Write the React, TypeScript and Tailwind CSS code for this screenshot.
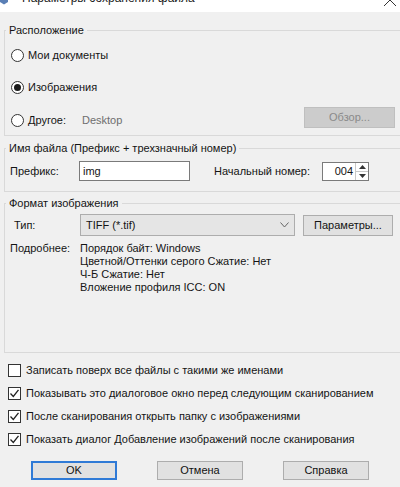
const font = { fontFamily: '"Liberation Sans", Arial, sans-serif' };

function Radio({ checked }: { checked?: boolean }) {
  return (
    <span className="flex h-[13px] w-[13px] shrink-0 items-center justify-center rounded-full border border-[#333] bg-white">
      {checked && <span className="h-[7px] w-[7px] rounded-full bg-[#1a1a1a]" />}
    </span>
  );
}

function Check({ checked }: { checked?: boolean }) {
  return (
    <span className="flex h-[13px] w-[13px] shrink-0 items-center justify-center border border-[#333] bg-white">
      {checked && (
        <svg width="11" height="11" viewBox="0 0 11 11">
          <path d="M1.5 5.5 L4.3 8.5 L9.5 1.8" fill="none" stroke="#222" strokeWidth="1.3" />
        </svg>
      )}
    </span>
  );
}

function Button({ label, primary }: { label: string; primary?: boolean }) {
  return (
    <div
      className={
        "flex h-[19px] w-[86px] items-center justify-center border bg-[#e1e1e1] text-[#111] " +
        (primary
          ? "border-[#2f7ad6] outline outline-1 -outline-offset-2 outline-[#2f7ad6]"
          : "border-[#adadad]")
      }
    >
      {label}
    </div>
  );
}

export default function App() {
  return (
    <div
      className="relative h-[487px] w-[400px] overflow-hidden bg-[#f0f0f0] text-[11px] leading-[15px] text-[#141414]"
      style={font}
    >
      {/* title bar, cropped at the top */}
      <div className="relative flex h-[12px] items-end overflow-hidden bg-white">
        <svg className="mb-[7px] shrink-0" width="9" height="6" viewBox="0 0 9 6">
          <path d="M0 0 L8 0 L8 3 L4 5.5 L0 3 Z" fill="#5a7fb5" />
        </svg>
        <span className="mb-[7px] ml-[13px] whitespace-nowrap text-[12px] leading-[13px] text-[#222]">
          Параметры сохранения файла
        </span>
        <svg className="absolute right-[3px] top-[-6px]" width="14" height="12" viewBox="0 0 14 12">
          <path d="M1 0 L13 12 M13 0 L1 12" stroke="#333" strokeWidth="1" />
        </svg>
      </div>

      {/* Расположение */}
      <fieldset className="ml-[4px] mt-[11px] w-[410px] border border-[#d9d9d9]">
        <legend className="ml-[1px] px-[3px]">Расположение</legend>
        <div className="w-[390px] pb-[5px] pl-[6px]">
          <div className="mt-[7px] flex h-[20px] items-center gap-[4px]">
            <Radio />
            <span>Мои документы</span>
          </div>
          <div className="mt-[12px] flex h-[20px] items-center gap-[4px]">
            <Radio checked />
            <span>Изображения</span>
          </div>
          <div className="mt-[13px] flex h-[20px] items-center gap-[4px]">
            <Radio />
            <span className="w-[50px]">Другое:</span>
            <span className="text-[#6e6e6e]">Desktop</span>
            <div className="ml-auto -mt-[5px] flex h-[21px] w-[91px] items-center justify-center border border-[#bfbfbf] bg-[#cccccc] text-[#8a8a8a]">
              Обзор...
            </div>
          </div>
        </div>
      </fieldset>

      {/* Имя файла */}
      <fieldset className="ml-[4px] mt-[5px] w-[410px] border border-[#d9d9d9]">
        <legend className="ml-[1px] px-[3px]">Имя файла (Префикс + трехзначный номер)</legend>
        <div className="mb-[10px] mt-[5px] flex h-[20px] items-center pl-[5px]">
          <span className="w-[69px]">Префикс:</span>
          <div className="flex h-[20px] w-[111px] items-center border border-[#7a7a7a] bg-white pl-[3px]">img</div>
          <span className="ml-[24px] w-[108px] whitespace-nowrap">Начальный номер:</span>
          <div className="flex h-[19px] w-[47px] items-stretch border border-[#7a7a7a] bg-white">
            <span className="flex flex-1 items-center justify-end pr-[2px]">004</span>
            <div className="flex w-[13px] flex-col border-l border-[#c8c8c8]">
              <div className="flex flex-1 items-center justify-center border-b border-[#c8c8c8]">
                <svg width="7" height="4" viewBox="0 0 7 4"><path d="M0 4 L3.5 0 L7 4 Z" fill="#333" /></svg>
              </div>
              <div className="flex flex-1 items-center justify-center">
                <svg width="7" height="4" viewBox="0 0 7 4"><path d="M0 0 L3.5 4 L7 0 Z" fill="#333" /></svg>
              </div>
            </div>
          </div>
        </div>
      </fieldset>

      {/* Формат изображения */}
      <fieldset className="ml-[4px] mt-[4px] w-[410px] border border-[#d9d9d9]">
        <legend className="ml-[1px] px-[3px]">Формат изображения</legend>
        <div className="mt-[3px] flex h-[22px] items-center pl-[9px]">
          <span className="w-[66px]">Тип:</span>
          <div className="flex h-[22px] w-[215px] items-center justify-between border border-[#adadad] bg-[#e5e5e5] pl-[5px] pr-[5px]">
            <span>TIFF (*.tif)</span>
            <svg width="9" height="6" viewBox="0 0 9 6">
              <path d="M0.5 0.5 L4.5 5 L8.5 0.5" fill="none" stroke="#666" strokeWidth="1" />
            </svg>
          </div>
          <div className="ml-[8px] flex h-[21px] w-[90px] items-center justify-center border border-[#adadad] bg-[#e1e1e1]">
            Параметры...
          </div>
        </div>
        <div className="mt-[6px] flex pb-[58px] pl-[5px] leading-[13px]">
          <span className="w-[70px]">Подробнее:</span>
          <div className="flex flex-col">
            <span>Порядок байт: Windows</span>
            <span>Цветной/Оттенки серого Сжатие: Нет</span>
            <span>Ч-Б Сжатие: Нет</span>
            <span>Вложение профиля ICC: ON</span>
          </div>
        </div>
      </fieldset>

      {/* флажки */}
      <div className="mt-[9px] flex flex-col gap-[7px] pl-[8px]">
        {[
          ["Записать поверх все файлы с такими же именами", false],
          ["Показывать это диалоговое окно перед следующим сканированием", true],
          ["После сканирования открыть папку с изображениями", true],
          ["Показать диалог Добавление изображений после сканирования", true],
        ].map(([label, on]) => (
          <div key={label as string} className="flex h-[16px] items-center gap-[5px] whitespace-nowrap">
            <Check checked={on as boolean} />
            <span>{label as string}</span>
          </div>
        ))}
      </div>

      <div className="mt-[14px] flex gap-[40px] pl-[31px]">
        <Button label="OK" primary />
        <Button label="Отмена" />
        <Button label="Справка" />
      </div>
    </div>
  );
}
